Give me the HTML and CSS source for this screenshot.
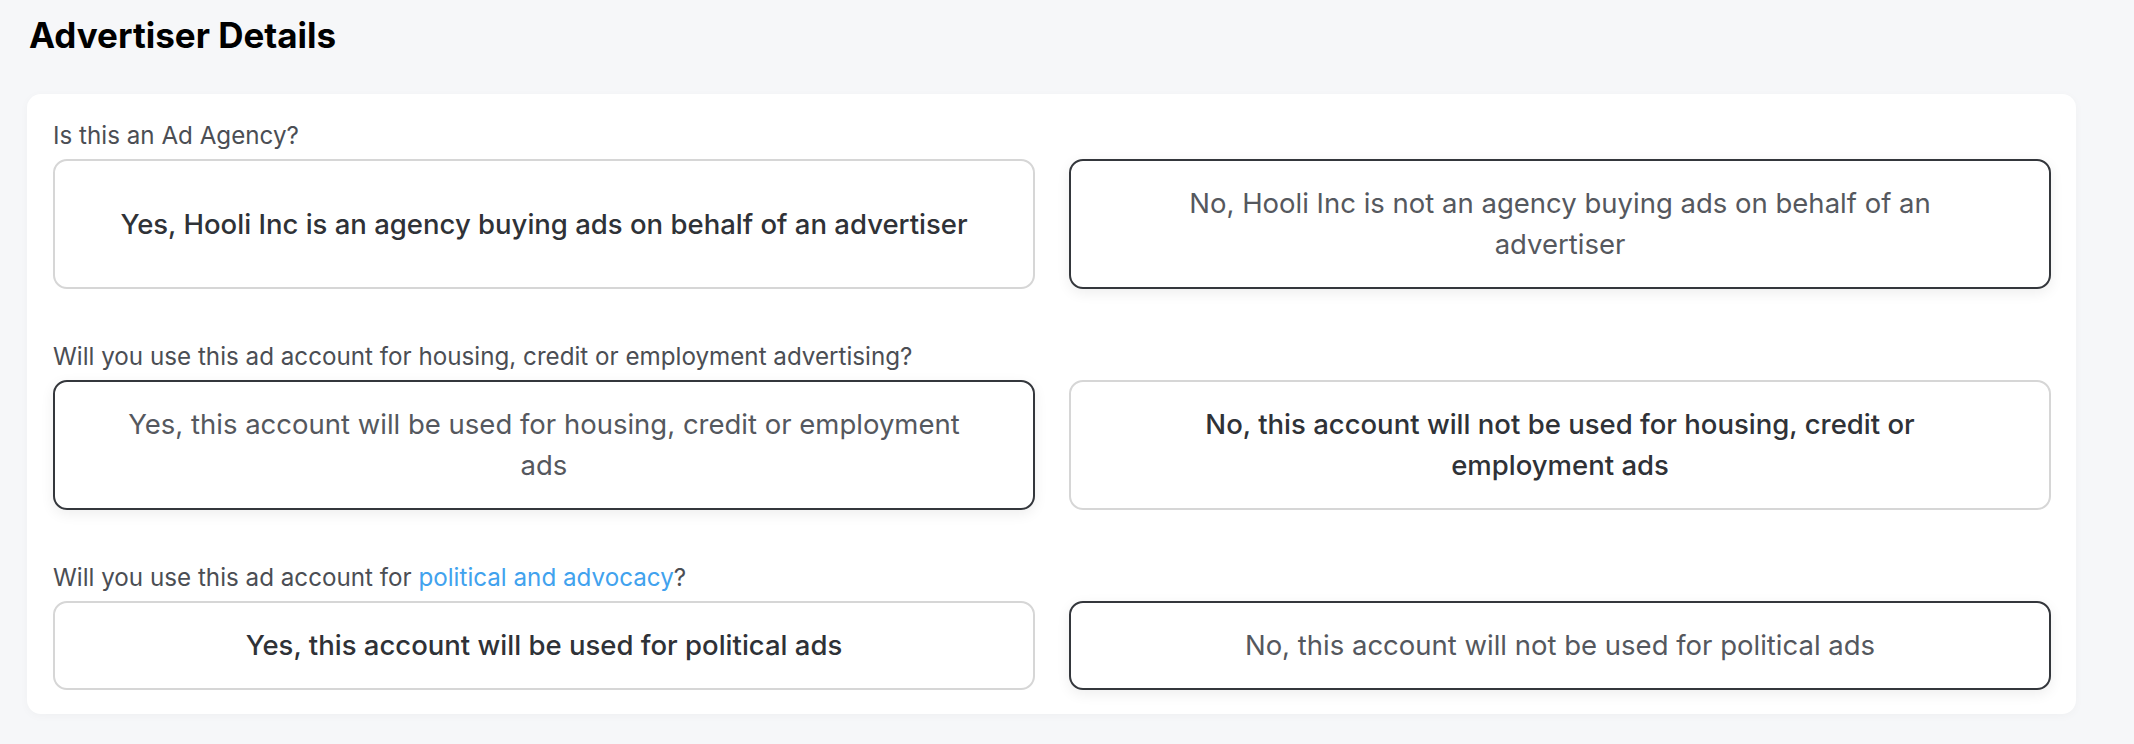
FILE: index.html
```html
<!DOCTYPE html>
<html lang="en">
<head>
    <meta charset="UTF-8">
    <meta name="viewport" content="width=device-width, initial-scale=1.0">
    <title>Advertiser Details</title>
    <link rel="stylesheet" href="styles.css">
</head>
<body>
    <div class="page">
        <h1 class="page-title">Advertiser Details</h1>

        <div class="card">
            <div class="question">
                <p class="question-label">Is this an Ad Agency?</p>
                <div class="choices">
                    <button class="choice">Yes, Hooli Inc is an agency buying ads on behalf of an advertiser</button>
                    <button class="choice selected">No, Hooli Inc is not an agency buying ads on behalf of an advertiser</button>
                </div>
            </div>

            <div class="question">
                <p class="question-label">Will you use this ad account for housing, credit or employment advertising?</p>
                <div class="choices">
                    <button class="choice selected">Yes, this account will be used for housing, credit or employment ads</button>
                    <button class="choice">No, this account will not be used for housing, credit or employment ads</button>
                </div>
            </div>

            <div class="question">
                <p class="question-label">Will you use this ad account for <a href="#" class="link">political and advocacy</a>?</p>
                <div class="choices">
                    <button class="choice">Yes, this account will be used for political ads</button>
                    <button class="choice selected">No, this account will not be used for political ads</button>
                </div>
            </div>
        </div>
    </div>
</body>
</html>
```

FILE: styles.css
```css
body {
    margin: 0;
    padding: 0;
    background-color: #f6f7f9;
    font-family: Inter, "Noto Sans", sans-serif;
    color: #2f3237;
}
.page {
    padding: 12px 58px 31px 27px;
}
.page-title {
    margin: 0 0 36px 2px;
    font-size: 35px;
    font-weight: 700;
    line-height: 46px;
    color: #000;
}
.card {
    background: #fff;
    border-radius: 14px;
    padding: 25px 25px 24px 26px;
    box-shadow: 0 2px 10px rgba(0, 0, 0, 0.03);
}
.question + .question {
    margin-top: 51px;
}
.question-label {
    margin: 0 0 6px 0;
    font-size: 24.2px;
    line-height: 34px;
    color: #4b4e54;
}
.link {
    color: #41a2ee;
    text-decoration: none;
}
.choices {
    display: grid;
    grid-template-columns: 1fr 1fr;
    gap: 34px;
}
.choice {
    font-family: inherit;
    font-size: 27.5px;
    line-height: 41px;
    font-weight: 500;
    color: #2f3237;
    background: #fff;
    border: 2px solid #d6d6d6;
    border-radius: 14px;
    padding: 22px 58px;
    text-align: center;
    cursor: pointer;
}
.choice.selected {
    font-weight: 400;
    color: #55585e;
    border-color: #34373c;
    box-shadow: 0 4px 14px rgba(0, 0, 0, 0.07);
}
```
